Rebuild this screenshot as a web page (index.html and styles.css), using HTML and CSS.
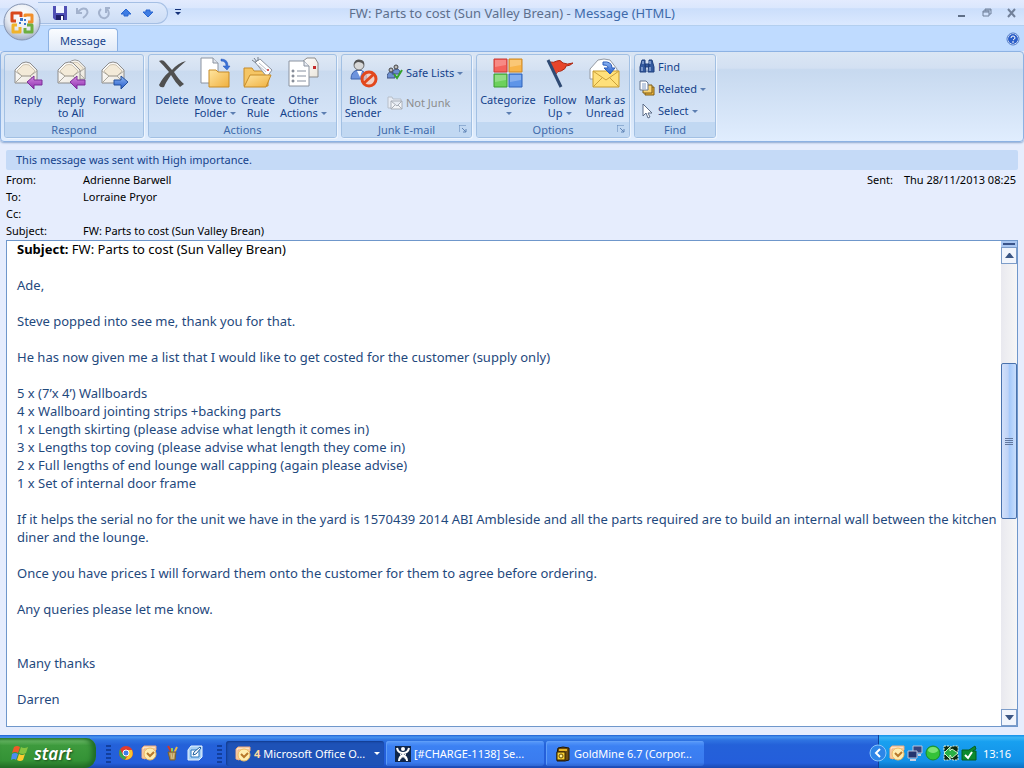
FILE: index.html
```html
<!DOCTYPE html>
<html lang="en">
<head>
    <meta charset="UTF-8">
    <meta name="viewport" content="width=device-width, initial-scale=1.0">
    <title>FW: Parts to cost (Sun Valley Brean) - Message (HTML)</title>
    <link rel="stylesheet" href="styles.css">
</head>
<body>
    <!-- Shared icon shapes -->
    <svg class="defs" aria-hidden="true">
        <defs>
            <linearGradient id="paper" x1="0" y1="0" x2="1" y2="1">
                <stop offset="0" stop-color="#ffffff"/><stop offset="1" stop-color="#ebe6dc"/>
            </linearGradient>
            <linearGradient id="folder" x1="0" y1="0" x2="1" y2="1">
                <stop offset="0" stop-color="#ffe5a0"/><stop offset="1" stop-color="#efb03f"/>
            </linearGradient>
            <linearGradient id="purple" x1="0" y1="0" x2="0" y2="1">
                <stop offset="0" stop-color="#d58be0"/><stop offset="1" stop-color="#8c2bb0"/>
            </linearGradient>
            <linearGradient id="blue" x1="0" y1="0" x2="0" y2="1">
                <stop offset="0" stop-color="#8fb8f5"/><stop offset="1" stop-color="#2158c8"/>
            </linearGradient>
            <radialGradient id="orb" cx="0.5" cy="0.3" r="0.7">
                <stop offset="0" stop-color="#ffffff"/><stop offset="0.6" stop-color="#e6eaf2"/><stop offset="1" stop-color="#a5b1c6"/>
            </radialGradient>
            <symbol id="envelope" viewBox="0 0 24 24">
                <path d="M1 9 8 2q4-2 8 0l7 7v13H1z" fill="url(#paper)" stroke="#8c8c8c"/>
                <path d="M3 10 9 4q3-1 6 0l6 6-5 5H8z" fill="#f3ead8" stroke="#cfc5b2"/>
                <path d="M1 10l7 5h8l7-5M1 22l7-7M23 22l-7-7" fill="none" stroke="#aaa69c"/>
            </symbol>
            <symbol id="outlook" viewBox="0 0 16 16">
                <path d="M1 13V3l2-2h12v4L4 14z" fill="#fbe3c4" stroke="#f0a878"/>
                <path d="M3 13V4h11" fill="none" stroke="#f0a878"/>
                <circle cx="9" cy="9" r="6" fill="#ffedb0" stroke="#eebb62"/>
                <path d="M6 8l3 3 4-4" fill="none" stroke="#b8782c" stroke-width="2"/>
            </symbol>
            <symbol id="launcher" viewBox="0 0 8 8">
                <path d="M0 7V0h7M3 3l4 4M7 4v3H4" fill="none" stroke="#5f83b5"/>
            </symbol>
        </defs>
    </svg>

    <header class="titlebar">
        <div class="quick-access">
            <button type="button" aria-label="Save"><svg width="14" height="14" viewBox="0 0 14 14"><path d="M0 0h14v14H2l-2-2z" fill="#4f4fb4"/><path d="M3 0h8v7H3z" fill="#eef3ff"/><path d="M3 9h8v5H3z" fill="#20206a"/><path d="M8 10h2v4H8z" fill="#fff"/></svg></button>
            <button type="button" aria-label="Undo"><svg width="14" height="14" viewBox="0 0 14 14"><path d="M2 2v5h5M3 6q4-5 8-3 4 4-3 9" fill="none" stroke="#a3b2cd" stroke-width="2"/></svg></button>
            <button type="button" aria-label="Redo"><svg width="14" height="14" viewBox="0 0 14 14"><path d="M4 3q-4 4 0 8 4 3 7-1 2-4-1-7M13 2H9v5" fill="none" stroke="#a3b2cd" stroke-width="2"/></svg></button>
            <button type="button" aria-label="Previous item"><svg width="14" height="14" viewBox="0 0 14 14"><path d="M7 3l5 5H9v2H5V8H2z" fill="#3f7de4" stroke="#2a66cf"/></svg></button>
            <button type="button" aria-label="Next item"><svg width="14" height="14" viewBox="0 0 14 14"><path d="M7 11L2 6h3V4h4v2h3z" fill="#3f7de4" stroke="#2a66cf"/></svg></button>
        </div>
        <button type="button" class="customize" aria-label="Customize toolbar"><svg width="6" height="7" viewBox="0 0 6 7"><path d="M0 0h6v1H0zM0 3h6L3 6z" fill="#15327a"/></svg></button>
        <h1>FW: Parts to cost (Sun Valley Brean) - <span>Message (HTML)</span></h1>
        <div class="window-controls">
            <button type="button" aria-label="Minimize"><svg width="10" height="10" viewBox="0 0 10 10"><path d="M1 7h7v2H1z" fill="#5f6f87"/></svg></button>
            <button type="button" aria-label="Restore"><svg width="10" height="10" viewBox="0 0 10 10"><path d="M3 3V1h6v5H7M1 3h6v5H1zM1 4h6M3 2h6" fill="none" stroke="#71809a"/></svg></button>
            <button type="button" aria-label="Close"><svg width="10" height="10" viewBox="0 0 10 10"><path d="M1 1l7 8M8 1L1 9" stroke="#71809a" stroke-width="2"/></svg></button>
        </div>
    </header>

    <button type="button" class="office-button" aria-label="Office">
        <svg width="40" height="40" viewBox="0 0 40 40">
            <circle cx="20" cy="20" r="18" fill="url(#orb)" stroke="#8594b2"/>
            <g fill="none" stroke-width="3" stroke-linejoin="round">
                <path d="M14 19h-4v-8h9v4" stroke="#d9481c"/>
                <path d="M23 15v-2h7v7h-4" stroke="#f2902c"/>
                <path d="M18 25v5h-7v-7h4" stroke="#f0b32a"/>
                <path d="M25 23h5v7h-7v-4" stroke="#6dae3f"/>
            </g>
            <g fill="#3b77cc"><path d="M18 16h3v3h-3zM22 17h2v2h-2zM17 20h2v2h-2zM22 21h2v2h-2z"/></g>
        </svg>
    </button>

    <nav class="tabs">
        <button type="button" class="tab">Message</button>
        <button type="button" class="help" aria-label="Help"><svg width="14" height="14" viewBox="0 0 14 14"><circle cx="7" cy="7" r="6" fill="#fff" stroke="#4a77c8"/><circle cx="7" cy="7" r="5" fill="#2c5fc9"/><path d="M5 6q0-2 2-2t2 2q0 1-2 2M7 9v2" fill="none" stroke="#fff"/></svg></button>
    </nav>

    <section class="ribbon">
        <div class="group respond">
            <div class="tools">
                <button type="button" class="big"><svg width="32" height="32" viewBox="0 0 32 32"><use href="#envelope" x="2" y="4" width="24" height="24"/><path d="M15 25l7-6v4h8v5h-8v4z" fill="url(#purple)" stroke="#7d2f99"/></svg><span>Reply</span></button>
                <button type="button" class="big"><svg width="32" height="32" viewBox="0 0 32 32"><use href="#envelope" x="9" y="2" width="22" height="22"/><use href="#envelope" x="2" y="4" width="24" height="24"/><path d="M15 25l7-6v4h8v5h-8v4z" fill="url(#purple)" stroke="#7d2f99"/></svg><span>Reply<br>to All</span></button>
                <button type="button" class="big"><svg width="32" height="32" viewBox="0 0 32 32"><use href="#envelope" x="3" y="4" width="24" height="24"/><path d="M30 25l-7-6v4h-7v5h7v4z" fill="url(#blue)" stroke="#24509c"/></svg><span>Forward</span></button>
            </div>
            <h2>Respond</h2>
        </div>

        <div class="group actions">
            <div class="tools">
                <button type="button" class="big"><svg width="32" height="32" viewBox="0 0 32 32"><path d="M3 4q4-2 6 1l7 8q6-7 14-9-7 6-12 11 5 8 10 12l-4 3q-5-5-9-12-5 7-7 12-4 1-5-2 4-8 10-13Q8 9 3 4z" fill="#505050"/></svg><span>Delete</span></button>
                <button type="button" class="big"><svg width="32" height="32" viewBox="0 0 32 32"><path d="M2 1h12l5 5v20H2z" fill="#fff" stroke="#8b93a0"/><path d="M14 1v5h5" fill="#dfe4ec" stroke="#8b93a0"/><path d="M10 13h7l2 2h11v15H10z" fill="url(#folder)" stroke="#c68b28"/><path d="M22 4q5 0 5 5h-3l4 4 3-4h-2q0-7-7-7z" fill="#3a72d8" stroke="#2456b5" stroke-width="0.5"/></svg><span>Move to<br>Folder<i class="caret"></i></span></button>
                <button type="button" class="big"><svg width="32" height="32" viewBox="0 0 32 32"><path d="M2 11h8l2 3h14v15H2z" fill="#f5c564" stroke="#c68b28"/><path d="M13 5l5-3 12 11-5 7z" fill="#fff" stroke="#8b93a0"/><path d="M16 8l8 7M17 6l8 7" stroke="#b7bdc8"/><circle cx="26" cy="13" r="1" fill="#cc2222"/><path d="M10 3l4 3M12 1l3 4M16 0v4" stroke="#77808d"/><path d="M8 18h21l-5 12H2z" fill="url(#folder)" stroke="#c68b28"/></svg><span>Create<br>Rule</span></button>
                <button type="button" class="big"><svg width="32" height="32" viewBox="0 0 32 32"><path d="M15 5l5-4h8l3 5v14H17z" fill="url(#paper)" stroke="#8b8b8b"/><path d="M26 9h3v3h-3z" fill="#c52b2b"/><path d="M2 4h15l5 5v20H2z" fill="#fff" stroke="#8b93a0"/><path d="M17 4v5h5" fill="#e8ecf2" stroke="#8b93a0"/><path d="M10 14h9M10 19h9M10 24h9" stroke="#8790a0"/><g fill="none" stroke="#5f6878"><circle cx="6" cy="14" r="1"/><circle cx="6" cy="19" r="1"/><circle cx="6" cy="24" r="1"/></g></svg><span>Other<br>Actions<i class="caret"></i></span></button>
            </div>
            <h2>Actions</h2>
        </div>

        <div class="group junk">
            <div class="tools">
                <button type="button" class="big"><svg width="32" height="32" viewBox="0 0 32 32"><path d="M4 22q0-8 7-9 8 0 9 9z" fill="#6c93dd" stroke="#3c62ad"/><path d="M10 14l3 6 2-6z" fill="#fff"/><circle cx="12" cy="8" r="5" fill="#d8d8d8" stroke="#6e6e6e"/><path d="M7 8q0-6 6-5 5 0 4 5-2-3-6-3-2 0-4 3z" fill="#555"/><circle cx="22" cy="22" r="7" fill="#ffc9b3" fill-opacity="0.7" stroke="#e2471c" stroke-width="3"/><path d="M17 26l10-9" stroke="#e2471c" stroke-width="3"/></svg><span>Block<br>Sender</span></button>
                <div class="stack">
                    <button type="button" class="small"><svg width="16" height="16" viewBox="0 0 16 16"><path d="M0 14q0-6 4-6t4 6zM5 10q1-5 5-5 3 0 3 5z" fill="#6c8fd0" stroke="#3d5383"/><circle cx="4" cy="6" r="2" fill="#bbb" stroke="#444"/><circle cx="9" cy="3" r="2" fill="#bbb" stroke="#444"/><path d="M7 10l3 4 5-8" fill="none" stroke="#35a32c" stroke-width="2"/></svg><span>Safe Lists<i class="caret"></i></span></button>
                    <button type="button" class="small" disabled><svg width="16" height="16" viewBox="0 0 16 16"><path d="M1 13V2h4l1 2h8v9z" fill="#e7ecf4" stroke="#b7bec9"/><path d="M4 6h11v8H4zM4 6l6 5 5-5M4 14l4-4M15 14l-4-4" fill="#f3f5f8" stroke="#a9afb8"/></svg><span>Not Junk</span></button>
                </div>
            </div>
            <h2>Junk E-mail</h2>
            <button type="button" class="launcher" aria-label="Junk options"><svg width="8" height="8"><use href="#launcher"/></svg></button>
        </div>

        <div class="group options">
            <div class="tools">
                <button type="button" class="big"><svg width="32" height="32" viewBox="0 0 32 32"><path d="M2 2h13v13H2z" fill="#f4635c" stroke="#c93932"/><path d="M17 2h13v13H17z" fill="#f8b449" stroke="#cc8622"/><path d="M2 17h13v13H2z" fill="#6dd15c" stroke="#3a9b31"/><path d="M17 17h13v13H17z" fill="#5e95e8" stroke="#2e62bb"/><path d="M3 3h11v5L3 10zM18 3h11v5l-11 2zM3 18h11v5L3 25zM18 18h11v5l-11 2z" fill="#fff" fill-opacity="0.25"/></svg><span>Categorize<br><i class="caret"></i></span></button>
                <button type="button" class="big"><svg width="32" height="32" viewBox="0 0 32 32"><path d="M5 5q5 1 8-1 3-2 6 2 4 2 10 0-3 3-7 3 0 3-5 5-3-1-6 4z" fill="#e8452a" stroke="#ac2812"/><path d="M4 3l13 27" stroke="#2f4a73" stroke-width="3"/></svg><span>Follow<br>Up<i class="caret"></i></span></button>
                <button type="button" class="big"><svg width="32" height="32" viewBox="0 0 32 32"><path d="M1 12l8-9q6-2 12 0l7 9v10H1z" fill="#fff" stroke="#949aa3"/><path d="M4 14h26v16H4z" fill="#ffe07a" stroke="#c79a2d"/><path d="M4 14l13 9 13-9M4 30l9-9M30 30l-9-9" fill="none" stroke="#cba03a"/><path d="M14 5q9-1 9 6h3l-5 6-6-6h4q0-3-5-3z" fill="url(#blue)" stroke="#2b5cba"/></svg><span>Mark as<br>Unread</span></button>
            </div>
            <h2>Options</h2>
            <button type="button" class="launcher" aria-label="Message options"><svg width="8" height="8"><use href="#launcher"/></svg></button>
        </div>

        <div class="group find">
            <div class="tools">
                <div class="stack">
                    <button type="button" class="small"><svg width="16" height="16" viewBox="0 0 16 16"><path d="M3 2h3v3l1 9H1V9zM10 2h3l2 7v5H9l1-9zM6 6h4v3H6z" fill="#345a9f" stroke="#1f3f7c"/><path d="M3 9v4M11 9v4M4 3v3M11 3v3" stroke="#bcd0f2"/></svg><span>Find</span></button>
                    <button type="button" class="small"><svg width="16" height="16" viewBox="0 0 16 16"><path d="M6 7h9v8H6z" fill="#f0b73f" stroke="#7d5a15"/><path d="M4 5h9v8H4z" fill="#f8d273" stroke="#7d5a15"/><path d="M1 1h6l2 2v7H1z" fill="#fff" stroke="#66768f"/><path d="M3 4h4M3 6h4M3 8h4" stroke="#7f9ac5"/></svg><span>Related<i class="caret"></i></span></button>
                    <button type="button" class="small"><svg width="16" height="16" viewBox="0 0 16 16"><path d="M4 1v12l3-3 2 5 2-1-2-4h4z" fill="#fff" stroke="#5d6d88"/></svg><span>Select<i class="caret"></i></span></button>
                </div>
            </div>
            <h2>Find</h2>
        </div>
    </section>

    <main>
        <p class="infobar">This message was sent with High importance.</p>
        <div class="headers">
            <dl>
                <dt>From:</dt><dd>Adrienne Barwell</dd>
                <dt>To:</dt><dd>Lorraine Pryor</dd>
                <dt>Cc:</dt><dd></dd>
                <dt>Subject:</dt><dd>FW: Parts to cost (Sun Valley Brean)</dd>
            </dl>
            <dl class="sent">
                <dt>Sent:</dt><dd>Thu 28/11/2013 08:25</dd>
            </dl>
        </div>

        <div class="reader">
            <article>
                <p class="original"><b>Subject:</b> FW: Parts to cost (Sun Valley Brean)</p>
                <p>Ade,</p>
                <p>Steve popped into see me, thank you for that.</p>
                <p>He has now given me a list that I would like to get costed for the customer (supply only)</p>
                <p>5 x (7’x 4’) Wallboards<br>
                4 x Wallboard jointing strips +backing parts<br>
                1 x Length skirting (please advise what length it comes in)<br>
                3 x Lengths top coving (please advise what length they come in)<br>
                2 x Full lengths of end lounge wall capping (again please advise)<br>
                1 x Set of internal door frame</p>
                <p>If it helps the serial no for the unit we have in the yard is 1570439 2014 ABI Ambleside and all the parts required are to build an internal wall between the kitchen diner and the lounge.</p>
                <p>Once you have prices I will forward them onto the customer for them to agree before ordering.</p>
                <p>Any queries please let me know.</p>
                <p class="closing">Many thanks</p>
                <p>Darren</p>
            </article>
            <div class="scrollbar">
                <div class="splitter"></div>
                <button type="button" aria-label="Scroll up"><svg width="9" height="5" viewBox="0 0 9 5"><path d="M0 5l4-5h1l4 5z" fill="#3b5684"/></svg></button>
                <div class="track"><div class="thumb"><span></span></div></div>
                <button type="button" aria-label="Scroll down"><svg width="9" height="5" viewBox="0 0 9 5"><path d="M0 0h9L5 5H4z" fill="#3b5684"/></svg></button>
            </div>
        </div>
    </main>

    <footer class="taskbar">
        <button type="button" class="start"><svg width="18" height="18" viewBox="0 0 18 18"><path d="M3 3q3-2 6 0L7 9q-3-2-6 0z" fill="#ef5a28"/><path d="M10 3q3 2 7 0l-2 6q-3 2-7 0z" fill="#85c441"/><path d="M1 10q3-2 6 0l-2 6q-2-2-5 0z" fill="#4b8df0"/><path d="M8 10q3 2 6 0l-2 6q-3 2-6 0z" fill="#fccb2f"/></svg>start</button>
        <div class="quick-launch">
            <span class="grip"></span>
            <button type="button" aria-label="Chrome"><svg width="16" height="16" viewBox="0 0 16 16"><circle cx="8" cy="8" r="7" fill="#e23b2e"/><path d="M8 5h6q3 9-7 10l4-6z" fill="#fbc52d"/><path d="M2 4l3 6 3 2-1 3Q-1 12 2 4z" fill="#36a852"/><circle cx="8" cy="8" r="3" fill="#3e7ee8" stroke="#fff"/></svg></button>
            <button type="button" aria-label="Outlook"><svg width="16" height="16"><use href="#outlook"/></svg></button>
            <button type="button" aria-label="Paint"><svg width="16" height="16" viewBox="0 0 16 16"><path d="M8 8L4 1" stroke="#d13828" stroke-width="2"/><path d="M8 8V3" stroke="#8ccf5b" stroke-width="2"/><path d="M10 8l3-6" stroke="#e8b84b" stroke-width="2"/><path d="M4 7h8l-1 8H6z" fill="#b99a5b" stroke="#7a5f2c"/><path d="M7 8l1 6M10 8l-1 6" stroke="#d9c48c"/></svg></button>
            <button type="button" aria-label="Show desktop"><svg width="16" height="16" viewBox="0 0 16 16"><path d="M4 1h11v11l-3 3H1V5z" fill="#a8d0f5" stroke="#e6f3ff"/><path d="M4 5h8v7H4z" fill="#fff" stroke="#2877bd"/><path d="M6 10l1-3 6-5 1 1-5 6z" fill="#fff" stroke="#1d5f9f"/></svg></button>
            <span class="grip"></span>
        </div>
        <div class="tasks">
            <button type="button" class="task active"><svg width="16" height="16"><use href="#outlook"/></svg><b>4</b><span>Microsoft Office O...</span><i class="caret"></i></button>
            <button type="button" class="task"><svg width="16" height="16" viewBox="0 0 16 16"><path d="M0 0h16v16H0z" fill="#10264a"/><circle cx="8" cy="3" r="2" fill="#fff"/><path d="M2 2q1 5 6 5t6-5M4 15q0-4 4-6 4 2 4 6" fill="none" stroke="#fff" stroke-width="2"/><path d="M5 8l7 6M11 8l-7 6" stroke="#fff"/></svg><span>[#CHARGE-1138] Se...</span></button>
            <button type="button" class="task"><svg width="16" height="16" viewBox="0 0 16 16"><path d="M3 2l5-1 6 1v12l-4 1H2V7z" fill="#6b4b10" stroke="#201500"/><path d="M2 6h8v8H2z" fill="#f7cf32" stroke="#302000"/><path d="M4 3h8v2H4z" fill="#e6b428"/><circle cx="6" cy="10" r="2" fill="#fff3a0" stroke="#6c4c00"/></svg><span>GoldMine 6.7 (Corpor...</span></button>
        </div>
        <div class="tray">
            <button type="button" class="expand" aria-label="Show hidden icons"><svg width="18" height="18" viewBox="0 0 18 18"><circle cx="9" cy="9" r="8" fill="#2d86e8" stroke="#8cc6fb"/><path d="M11 5L7 9l4 4" fill="none" stroke="#fff" stroke-width="2"/></svg></button>
            <svg width="16" height="16"><use href="#outlook"/></svg>
            <svg width="16" height="16" viewBox="0 0 16 16"><path d="M6 1h9v7H6z" fill="#35457c" stroke="#b9c4dd"/><path d="M1 6h9v7H1z" fill="#24356e" stroke="#b9c4dd"/><path d="M3 15h6M11 10h3" stroke="#c8d0e2" stroke-width="2"/></svg>
            <svg width="16" height="16" viewBox="0 0 16 16"><circle cx="8" cy="8" r="7" fill="#35c238" stroke="#178c28"/><ellipse cx="8" cy="5" rx="5" ry="3" fill="#9af08f" fill-opacity="0.7"/></svg>
            <svg width="16" height="16" viewBox="0 0 16 16"><path d="M1 1h5l2 1 2-1h5v5l-1 2 1 2v5h-5l-2-1-2 1H1v-5l1-2-1-2z" fill="#0b2b12" stroke="#e6f5e6" stroke-dasharray="2 1"/><path d="M1 8l6-6v4l2-2 6 4-6 5-2-3v4z" fill="#28b045" stroke="#c9f5c9"/></svg>
            <svg width="16" height="16" viewBox="0 0 16 16"><path d="M1 5h7l6-4 1 3-3 2h3v9H1z" fill="#0d8a2f" stroke="#056020"/><path d="M4 10l3 3 4-6" fill="none" stroke="#fff" stroke-width="2"/></svg>
            <time>13:16</time>
        </div>
    </footer>
</body>
</html>
```
FILE: styles.css
```css
* {
    box-sizing: border-box;
}
body {
    display: flex;
    flex-direction: column;
    min-height: 100vh;
    margin: 0;
    font-family: "Noto Sans", "Open Sans", sans-serif;
    font-size: 11px;
    color: #000;
    background-color: #e6edfd;
}
h1, h2, p, dl, dd {
    margin: 0;
    font-weight: normal;
}
button {
    margin: 0;
    padding: 0;
    border: none;
    background: none;
    font: inherit;
    color: inherit;
    cursor: pointer;
}
svg {
    display: block;
    flex: none;
}
.defs {
    position: absolute;
    width: 0;
    height: 0;
}

/* Title bar */
.titlebar {
    position: relative;
    display: flex;
    align-items: center;
    height: 26px;
    padding-left: 38px;
    background: linear-gradient(#e3ebfe 0, #dbe7fd 30%, #cbdefb 35%, #dbe9ff 100%);
    border-bottom: 1px solid #b3cfef;
}
.quick-access {
    display: flex;
    align-items: center;
    gap: 8px;
    height: 22px;
    padding: 0 12px 0 15px;
    border: 1px solid #a5bfe4;
    border-left: none;
    border-radius: 0 11px 11px 0;
    background: linear-gradient(#dfeafc, #cdddf5);
}
.customize {
    margin-left: 7px;
}
.titlebar h1 {
    position: absolute;
    left: 0;
    right: 0;
    text-align: center;
    font-size: 13px;
    color: #5d6f8c;
    pointer-events: none;
}
.titlebar h1 span {
    color: #3e6aaa;
}
.window-controls {
    display: flex;
    gap: 15px;
    margin-left: auto;
    padding-right: 7px;
}
.office-button {
    position: absolute;
    top: 2px;
    left: 2px;
}

/* Tabs */
.tabs {
    display: flex;
    justify-content: space-between;
    align-items: flex-end;
    height: 25px;
    padding: 0 4px 0 48px;
    background-color: #bfdbff;
}
.tab {
    width: 70px;
    height: 24px;
    margin-bottom: -1px;
    border: 1px solid #8db2e3;
    border-bottom: none;
    border-radius: 4px 4px 0 0;
    background: linear-gradient(#fafcff, #dfe9f7);
    color: #15428b;
}
.help {
    align-self: center;
}

/* Ribbon */
.ribbon {
    display: flex;
    gap: 4px;
    padding: 2px 3px 3px;
    border: 1px solid #8db2e3;
    border-radius: 4px;
    background: linear-gradient(#dbe6f4 0, #d3e0f2 18%, #c7d9ef 20%, #e0edfe 100%);
    box-shadow: 0 1px 2px #8ea9cf;
    color: #15428b;
}
.group {
    position: relative;
    display: flex;
    flex-direction: column;
    height: 84px;
    border: 1px solid #a2c0e3;
    border-radius: 3px;
    overflow: hidden;
    background: linear-gradient(#dee8f5 0, #d4e1f2 18%, #c9daef 20%, #dae8fb 100%);
    box-shadow: 1px 1px 0 #eef5fe;
}
.respond {
    width: 140px;
}
.actions {
    width: 189px;
}
.junk {
    width: 131px;
}
.options {
    width: 154px;
}
.find {
    width: 82px;
}
.tools {
    display: flex;
    flex: 1;
    justify-content: space-evenly;
    padding-top: 2px;
}
.respond .tools,
.actions .tools {
    justify-content: flex-start;
    gap: 1px;
    padding-left: 2px;
}
.group h2 {
    height: 15px;
    line-height: 15px;
    font-size: 11px;
    text-align: center;
    color: #3e6aaa;
    background-color: #c1d8f2;
}
.big {
    display: flex;
    flex-direction: column;
    align-items: center;
    min-width: 42px;
    line-height: 13px;
    white-space: nowrap;
}
.big svg {
    margin-bottom: 4px;
}
.caret {
    display: inline-block;
    margin-left: 3px;
    vertical-align: 2px;
    border: 3px solid transparent;
    border-top-color: #5c7eb1;
    border-bottom: none;
}
.stack {
    display: flex;
    flex: 1;
    flex-direction: column;
    justify-content: space-around;
    padding-left: 4px;
}
.small {
    display: flex;
    align-items: center;
    gap: 3px;
    height: 22px;
    white-space: nowrap;
}
.junk .stack {
    padding: 0 0 4px 3px;
}
.find .tools {
    padding: 0;
}
.small:disabled {
    color: #8d8d8d;
}
.launcher {
    position: absolute;
    right: 4px;
    bottom: 4px;
}

/* Message */
main {
    display: flex;
    flex: 1;
    flex-direction: column;
    padding: 8px 6px;
}
.infobar {
    height: 20px;
    padding-left: 10px;
    line-height: 20px;
    border-radius: 2px;
    color: #15428b;
    background-color: #c5daf7;
}
.headers {
    display: flex;
    justify-content: space-between;
    padding: 1px 2px 1px 0;
}
.headers dl {
    display: grid;
    grid-template-columns: 77px auto;
    grid-auto-rows: 17px;
    line-height: 17px;
}
.headers .sent {
    grid-template-columns: 37px auto;
}
.reader {
    display: flex;
    flex: 1;
    border: 1px solid #6f97cb;
    background-color: #fff;
}
article {
    flex: 1;
    padding-left: 10px;
    font-family: "Noto Sans", "Open Sans", sans-serif;
    font-size: 13px;
    line-height: 18px;
    color: #1f497d;
}
article p {
    margin-bottom: 18px;
}
article p:last-child {
    margin-bottom: 0;
}
article .original {
    line-height: 17px;
    color: #000;
}
article .closing {
    margin-top: 36px;
}
.scrollbar {
    display: flex;
    flex-direction: column;
    width: 16px;
    background: linear-gradient(90deg, #e9e9ef, #f6f6f6);
}
.splitter {
    height: 6px;
    border: 2px solid #a9c6f0;
    background-color: #38538a;
}
.scrollbar button {
    display: flex;
    align-items: center;
    justify-content: center;
    height: 17px;
    border: 1px solid #7c9cc9;
    background-color: #f1f5fc;
}
.track {
    display: grid;
    flex: 1;
    grid-template-rows: 99fr 156fr 190fr;
}
.thumb {
    display: flex;
    grid-row: 2;
    align-items: center;
    justify-content: center;
    border: 1px solid #4a72ad;
    border-radius: 2px;
    background: linear-gradient(90deg, #d2e0fa 0, #bfd3f6 45%, #a3c8fb 50%, #c9defc 100%);
}
.thumb span {
    width: 8px;
    height: 7px;
    background: repeating-linear-gradient(#63789f 0, #63789f 1px, transparent 1px, transparent 2px);
}

/* Taskbar */
.taskbar {
    display: flex;
    height: 33px;
    color: #fff;
    background: linear-gradient(#1d5fd0 0, #4793f0 6%, #2f74e2 15%, #2461d9 30%, #245edb 85%, #1a48b0 100%);
}
.start {
    display: flex;
    align-items: center;
    gap: 5px;
    width: 96px;
    margin-top: 3px;
    padding-left: 11px;
    border-radius: 0 10px 12px 0;
    background: linear-gradient(#3b8c3b 0, #62b35f 10%, #3d9a3d 25%, #349236 75%, #256f27 100%);
    box-shadow: inset -4px 0 5px #1f6b25;
    font-size: 17px;
    font-weight: 600;
    font-style: italic;
    text-shadow: 1px 1px 2px #1b4d1c;
}
.quick-launch {
    display: flex;
    align-items: center;
    gap: 7px;
    width: 130px;
    padding: 3px 0 0 10px;
}
.grip {
    width: 5px;
    height: 20px;
    background: repeating-linear-gradient(transparent 0, transparent 2px, #123f9e 2px, #123f9e 4px);
}
.grip:last-child {
    margin-left: 7px;
}
.tasks {
    display: flex;
    flex: 1;
    gap: 2px;
    padding: 6px 0 2px;
}
.task {
    display: flex;
    align-items: center;
    gap: 3px;
    width: 158px;
    padding: 0 4px 0 9px;
    border-radius: 3px;
    background: linear-gradient(#5a9bfa, #3c81f3 20%, #3a7bef 85%, #2e66d3);
    box-shadow: inset 1px 1px 0 #5e9df8;
    white-space: nowrap;
}
.task.active {
    background: #1e52b7;
    box-shadow: inset 1px 1px 2px #123b8c;
}
.task b {
    color: #ffd9a0;
}
.task .caret {
    margin-left: auto;
    border-top-color: #fff;
}
.tray {
    display: flex;
    align-items: center;
    gap: 2px;
    width: 146px;
    padding: 3px 13px 0 0;
    border-left: 1px solid #103f9a;
    background: linear-gradient(#1590ea 0, #3bb5f5 8%, #18a0f0 20%, #1290e6 80%, #0c6fc0 100%);
}
.expand {
    margin-left: -10px;
}
.tray time {
    margin-left: auto;
}
```
